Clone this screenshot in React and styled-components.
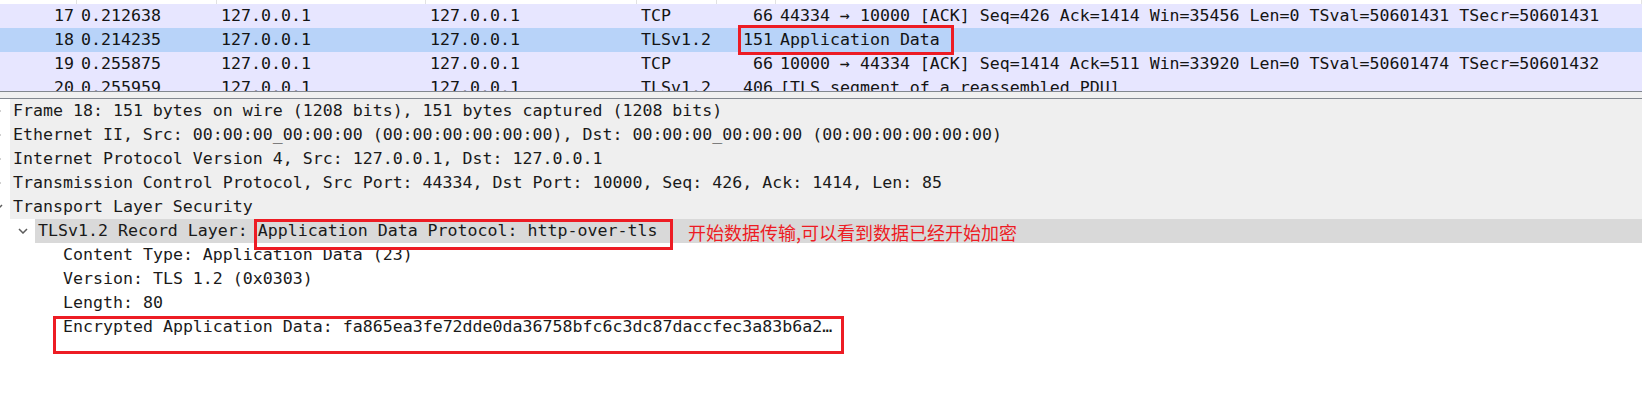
import React from "react";
import styled, { createGlobalStyle } from "styled-components";

const GlobalStyle = createGlobalStyle`
  html, body { margin: 0; padding: 0; background: #ffffff; }
  body { font-family: "DejaVu Sans Mono", "Liberation Mono", monospace; }
`;

const COLS = "77px 140px 209px 211px 80px 59px 1fr";

const Screen = styled.div`
  position: relative;
  width: 1642px;
  height: 403px;
  overflow: hidden;
  background: #ffffff;
  display: flex;
  flex-direction: column;
`;

const PacketList = styled.div`
  flex: none;
  height: 92px;
  box-sizing: border-box;
  border-bottom: 1px solid #82878f;
  overflow: hidden;
  font-size: 16.6px;
  color: #141414;
`;

const HeaderStub = styled.div`
  display: grid;
  grid-template-columns: ${COLS};
  height: 4px;
  background: #ffffff;
`;

const HeaderCell = styled.div`
  border-right: 1px solid #e2e2e2;
`;

const PacketRow = styled.div`
  display: grid;
  grid-template-columns: ${COLS};
  height: 24px;
  line-height: 24px;
  white-space: nowrap;
  background: ${(p) => (p.$selected ? "#b8d3f9" : "#e7e6ff")};
`;

const Cell = styled.span`
  padding: 0 3px 0 4px;
  text-align: ${(p) => (p.$right ? "right" : "left")};
  overflow: ${(p) => (p.$free ? "visible" : "hidden")};
`;

const Splitter = styled.div`
  flex: none;
  height: 6px;
  background: #f0f0f0;
  border-bottom: 1px solid #82878f;
`;

const Detail = styled.div`
  flex: 1;
  overflow: hidden;
  background: #ffffff;
  font-size: 16.6px;
  color: #1a1a1a;
`;

const Tree = styled.div`
  margin-left: -15px;
  width: calc(100% + 15px);
`;

const TreeRow = styled.div`
  display: flex;
  height: 24px;
  line-height: 24px;
  white-space: nowrap;
  padding-left: ${(p) => p.$level * 25}px;
`;

const Toggle = styled.span`
  flex: 0 0 25px;
  display: flex;
  align-items: center;
  justify-content: center;
`;

const Label = styled.span`
  flex: 1;
  padding-left: 3px;
  background: ${(p) => p.$bg};
`;

const Box = styled.div`
  position: absolute;
  box-sizing: border-box;
  border: 3px solid #ed1c24;
  left: ${(p) => p.$x}px;
  top: ${(p) => p.$y}px;
  width: ${(p) => p.$w}px;
  height: ${(p) => p.$h}px;
  pointer-events: none;
`;

const Note = styled.span`
  position: absolute;
  left: 688px;
  top: 220px;
  font-family: "Noto Sans CJK SC", "Noto Sans", sans-serif;
  font-size: 18px;
  line-height: 24px;
  color: #ed1c24;
  white-space: nowrap;
`;

const Chevron = ({ open }) =>
  open ? (
    <svg width="10" height="6" viewBox="0 0 10 6">
      <path d="M1 1 L5 5 L9 1" fill="none" stroke="#5c5c5c" strokeWidth="1.5" />
    </svg>
  ) : (
    <svg width="6" height="10" viewBox="0 0 6 10">
      <path d="M1 1 L5 5 L1 9" fill="none" stroke="#9a9a9a" strokeWidth="1.3" />
    </svg>
  );

const packets = [
  { no: 17, time: "0.212638", proto: "TCP", len: 66, info: "44334 → 10000 [ACK] Seq=426 Ack=1414 Win=35456 Len=0 TSval=50601431 TSecr=50601431" },
  { no: 18, time: "0.214235", proto: "TLSv1.2", len: 151, info: "Application Data", selected: true },
  { no: 19, time: "0.255875", proto: "TCP", len: 66, info: "10000 → 44334 [ACK] Seq=1414 Ack=511 Win=33920 Len=0 TSval=50601474 TSecr=50601432" },
  { no: 20, time: "0.255959", proto: "TLSv1.2", len: 406, info: "[TLS segment of a reassembled PDU]" },
];

const tree = [
  { level: 0, toggle: "closed", bg: "#efefef", text: "Frame 18: 151 bytes on wire (1208 bits), 151 bytes captured (1208 bits)" },
  { level: 0, toggle: "closed", bg: "#efefef", text: "Ethernet II, Src: 00:00:00_00:00:00 (00:00:00:00:00:00), Dst: 00:00:00_00:00:00 (00:00:00:00:00:00)" },
  { level: 0, toggle: "closed", bg: "#efefef", text: "Internet Protocol Version 4, Src: 127.0.0.1, Dst: 127.0.0.1" },
  { level: 0, toggle: "closed", bg: "#efefef", text: "Transmission Control Protocol, Src Port: 44334, Dst Port: 10000, Seq: 426, Ack: 1414, Len: 85" },
  { level: 0, toggle: "open", bg: "#efefef", text: "Transport Layer Security" },
  { level: 1, toggle: "open", bg: "#d9d9d9", text: "TLSv1.2 Record Layer: Application Data Protocol: http-over-tls" },
  { level: 2, bg: "transparent", text: "Content Type: Application Data (23)" },
  { level: 2, bg: "transparent", text: "Version: TLS 1.2 (0x0303)" },
  { level: 2, bg: "transparent", text: "Length: 80" },
  { level: 2, bg: "transparent", text: "Encrypted Application Data: fa865ea3fe72dde0da36758bfc6c3dc87daccfec3a83b6a2…" },
];

export default function App() {
  return (
    <>
      <GlobalStyle />
      <Screen>
        <PacketList>
          <HeaderStub>
            {Array.from({ length: 7 }).map((_, i) => (
              <HeaderCell key={i} />
            ))}
          </HeaderStub>
          {packets.map((p) => (
            <PacketRow key={p.no} $selected={p.selected}>
              <Cell $right>{p.no}</Cell>
              <Cell>{p.time}</Cell>
              <Cell>127.0.0.1</Cell>
              <Cell>127.0.0.1</Cell>
              <Cell>{p.proto}</Cell>
              <Cell $right>{p.len}</Cell>
              <Cell $free>{p.info}</Cell>
            </PacketRow>
          ))}
        </PacketList>
        <Splitter />
        <Detail>
          <Tree>
            {tree.map((r, i) => (
              <TreeRow key={i} $level={r.level}>
                <Toggle>{r.toggle && <Chevron open={r.toggle === "open"} />}</Toggle>
                <Label $bg={r.bg}>{r.text}</Label>
              </TreeRow>
            ))}
          </Tree>
        </Detail>
        <Box $x={738} $y={25} $w={216} $h={30} />
        <Box $x={254} $y={219} $w={419} $h={31} />
        <Box $x={53} $y={316} $w={791} $h={38} />
        <Note>开始数据传输,可以看到数据已经开始加密</Note>
      </Screen>
    </>
  );
}
